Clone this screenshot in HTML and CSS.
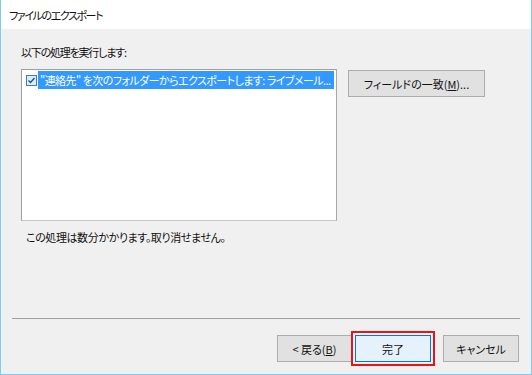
FILE: index.html
```html
<!DOCTYPE html>
<html lang="ja">
<head>
<meta charset="utf-8">
<link rel="stylesheet" href="styles.css">
</head>
<body>
<div class="window">
  <div class="header">ファイルのエクスポート</div>
  <div class="content">
    <div class="label">以下の処理を実行します:</div>
    <div class="main-row">
      <div class="listbox">
        <div class="item">
          <span class="check"><svg width="11" height="11" viewBox="0 0 11 11"><rect x="0.5" y="0.5" width="10" height="10" fill="#dcecfc" stroke="#3c7fb1"/><path d="M2.5 5.5 L4.5 7.5 L8.5 3" fill="none" stroke="#1a4f8a" stroke-width="1.3"/></svg></span>
          <span class="sel">"連絡先" を次のフォルダーからエクスポートします: ライブメール...</span>
        </div>
      </div>
      <button class="btn field-btn">フィールドの一致(<u>M</u>)...</button>
    </div>
    <div class="note">この処理は数分かかります。取り消せません。</div>
  </div>
  <div class="separator"></div>
  <div class="buttons">
    <button class="btn back">&lt;&nbsp;戻る(<u>B</u>)</button>
    <button class="btn primary">完了</button>
    <button class="btn cancel">キャンセル</button>
  </div>
</div>
</body>
</html>
```
FILE: styles.css
```css
html, body {
  margin: 0;
  padding: 0;
  background: #f0f0f0;
}
body {
  font-family: "Noto Sans CJK JP", "Noto Sans", sans-serif;
  font-size: 11px;
  font-feature-settings: "palt";
  color: #111;
}
.window {
  width: 532px;
  height: 375px;
  box-sizing: border-box;
  border-left: 1px solid #7ccdf3;
  border-right: 1px solid #7ccdf3;
  border-bottom: 1px solid #7ccdf3;
  background: #f0f0f0;
  display: flex;
  flex-direction: column;
}
.header {
  height: 29px;
  background: #ffffff;
  padding-left: 8px;
  line-height: 31px;
  letter-spacing: -1.4px;
  flex: none;
}
.content {
  box-sizing: border-box;
  padding: 15px 0 0 20px;
  height: 215px;
  flex: none;
}
.label {
  line-height: 16px;
  height: 16px;
  letter-spacing: -1.2px;
}
.main-row {
  display: flex;
  gap: 11px;
  margin-top: 9px;
  align-items: flex-start;
}
.listbox {
  width: 316px;
  height: 152px;
  box-sizing: border-box;
  background: #fff;
  border: 1px solid #a0a0a0;
  border-bottom-color: #c8c8c8;
  border-right-color: #a8a8a8;
  padding: 1px 2px 0 4px;
}
.item {
  display: flex;
  align-items: center;
  height: 18px;
}
.check {
  width: 12px;
  height: 11px;
  display: flex;
  flex: none;
}
.sel {
  background: #3399ff;
  color: #fff;
  flex: 1;
  height: 18px;
  line-height: 18px;
  padding-left: 2px;
  white-space: nowrap;
  overflow: hidden;
  letter-spacing: -0.55px;
}
.btn {
  font-family: inherit;
  font-size: 11px;
  font-feature-settings: "palt";
  color: #111;
  background: #e1e1e1;
  border: 1px solid #adadad;
  height: 27px;
  padding: 0;
  margin: 0;
  box-sizing: border-box;
}
.field-btn {
  width: 137px;
  margin-top: 1px;
}
.note {
  margin-top: 8px;
  margin-left: 5px;
  line-height: 16px;
  letter-spacing: -0.4px;
}
.separator {
  margin: 74px 11px 0 11px;
  height: 0;
  border-top: 1px solid #a0a0a0;
  flex: none;
}
.buttons {
  display: flex;
  justify-content: flex-end;
  padding-right: 12px;
  margin-top: 16px;
}
.back {
  width: 75px;
}
.primary {
  width: 76px;
  margin-left: 3px;
  background: #e5f1fb;
  border-color: #0078d7;
  outline: 2px solid #e8141b;
  outline-offset: 2px;
  position: relative;
}
.cancel {
  width: 76px;
  margin-left: 12px;
}
```
